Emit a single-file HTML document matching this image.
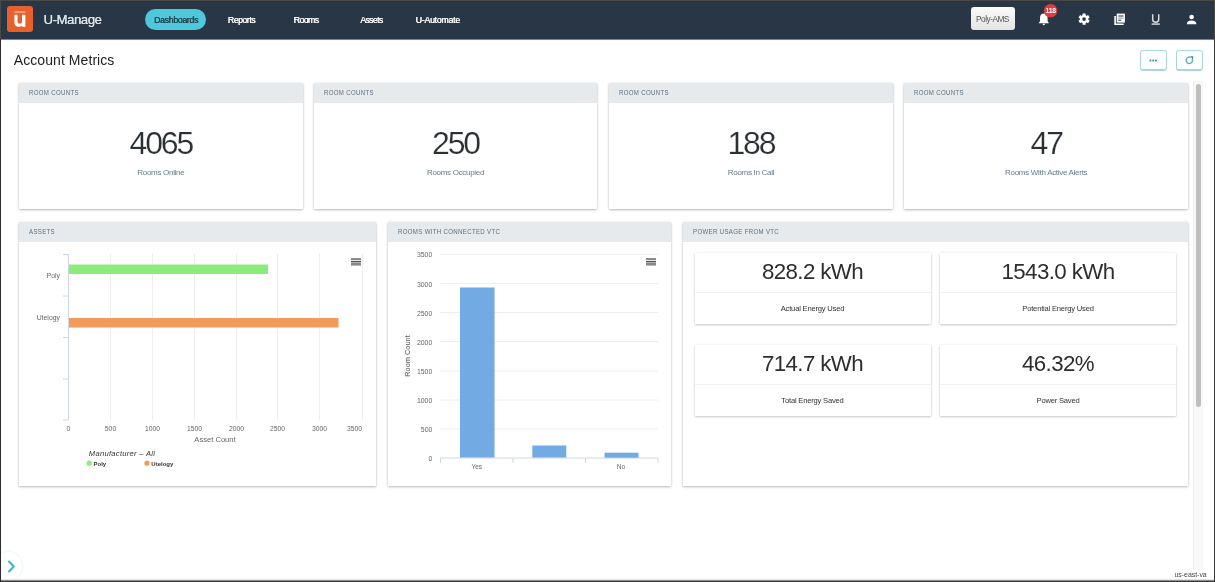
<!DOCTYPE html>
<html><head><meta charset="utf-8">
<style>
*{margin:0;padding:0;box-sizing:border-box}
html,body{width:1215px;height:582px;overflow:hidden;background:#fff}
body{font-family:"Liberation Sans",sans-serif;position:relative}
.a{position:absolute}
.t{position:absolute;white-space:nowrap;line-height:1}
#nav{position:absolute;left:1px;top:1px;width:1213px;height:38px;background:#293646;box-shadow:0 0.5px 0.5px rgba(41,54,70,.6)}
.nl{position:absolute;top:14.5px;font-size:8.8px;letter-spacing:-0.35px;color:#fff;line-height:1;text-shadow:0.3px 0 0 currentColor}
.card{position:absolute;background:#fff;box-shadow:0 1px 3px rgba(0,0,0,.1),0 1px 2px rgba(0,0,0,.18),0 0 4px rgba(0,0,0,.06)}
.ch{position:absolute;left:0;top:0;right:0;height:19.5px;background:#e7eaed}
.ct{position:absolute;left:9.8px;top:6.2px;font-size:7.6px;letter-spacing:.42px;transform:scaleX(0.8);transform-origin:0 0;color:#5d6e7c;line-height:1}
.big{position:absolute;left:0;right:0;text-align:center;font-size:32px;letter-spacing:-2.15px;color:#2b3035;line-height:1;-webkit-text-stroke:0.2px #fff}
.sub{position:absolute;left:0;right:0;text-align:center;font-size:8px;letter-spacing:-0.3px;color:#687b8c;line-height:1}
.ic{position:absolute;width:236px;height:71px;background:#fff;box-shadow:0 1px 2px rgba(0,0,0,.2),0 0 3px rgba(0,0,0,.08)}
.icv{position:absolute;left:0;right:0;top:8px;text-align:center;font-size:22.3px;color:#2d2d2d;line-height:1;letter-spacing:-0.6px}
.icd{position:absolute;left:0;right:0;top:39px;height:1px;background:#f2f2f2}
.icl{position:absolute;left:0;right:0;top:52px;text-align:center;font-size:7.6px;letter-spacing:-0.2px;color:#333;line-height:1}
svg text{font-family:"Liberation Sans",sans-serif}
</style></head><body><div id="wrap" style="position:absolute;left:0;top:0;width:1215px;height:582px;filter:blur(0.3px)">
<!-- scrollbar -->
<div class="a" style="left:1193px;top:81px;width:10px;height:489px;background:#f8f8f8;border-left:1px solid #f0f0f0"></div>
<div class="a" style="left:1195.5px;top:84px;width:5.5px;height:323px;background:#bfbfbf;border-radius:3px"></div>
<div class="t" style="left:1174.5px;top:571.5px;font-size:6.9px;letter-spacing:0px;color:#444">us-east-va</div>
<!-- chevron -->
<div class="a" style="left:-6px;top:552px;width:28px;height:28px;border-radius:50%;box-shadow:0 0 3px rgba(58,180,204,.22)"></div>
<svg class="a" style="left:0;top:548px" width="30" height="34">
  <path d="M9 13.5 L13.8 18.5 L9 23.5" fill="none" stroke="#3ab4cc" stroke-width="1.9" stroke-linecap="round" stroke-linejoin="round"/>
</svg>
<!-- top right buttons -->
<div class="a" style="left:1140px;top:49.6px;width:27px;height:21.4px;border:1px solid #a9d6de;border-bottom-width:2px;border-radius:3px;background:#fff"></div>
<div class="a" style="left:1175.6px;top:49.6px;width:27px;height:21.4px;border:1px solid #a9d6de;border-bottom-width:2px;border-radius:3px;background:#fff"></div>
<svg class="a" style="left:1140px;top:49px" width="63" height="22">
  <g fill="#2f8e9e"><rect x="9.5" y="10.6" width="1.8" height="1.8"/><rect x="12.3" y="10.6" width="1.8" height="1.8"/><rect x="15.1" y="10.6" width="1.8" height="1.8"/></g>
  <path d="M52.1 9.6 A3.2 3.2 0 1 1 50.6 8.3" fill="none" stroke="#4ba6b6" stroke-width="1.4" opacity="0.9"/>
  <path d="M50.3 7.2 L53.3 7.2 L52.9 10.4 Z" fill="#2a8e9e"/>
</svg>
<div id="nav">
  <div class="a" style="left:6px;top:5.2px;width:26px;height:25.8px;background:#e8602c;border-radius:3px">
    <svg width="26" height="26" style="position:absolute;left:0;top:0">
      <rect x="7.4" y="5.1" width="11" height="1.9" fill="#f09f7c"/>
      <path d="M7.4 8.8 H10.5 V15.6 Q10.5 17.8 12.8 17.8 Q15 17.8 15 15.6 V8.8 H18.4 V20.8 H15.1 V19.5 Q14.1 20.8 12.1 20.8 Q7.4 20.8 7.4 16.3 Z" fill="#fff"/>
    </svg>
  </div>
  <div class="t" style="left:42.5px;top:12.3px;font-size:13px;letter-spacing:-0.35px;color:#dfe3e8;text-shadow:0.35px 0 0 #dfe3e8">U-Manage</div>
  <div class="a" style="left:144.3px;top:8px;width:61px;height:21px;background:#4ec8da;border-radius:11px"></div>
  <div class="nl" style="left:153px;color:#23404c">Dashboards</div>
  <div class="nl" style="left:226.8px;letter-spacing:-0.52px">Reports</div>
  <div class="nl" style="left:292.6px;letter-spacing:-0.62px">Rooms</div>
  <div class="nl" style="left:359.2px;letter-spacing:-0.7px">Assets</div>
  <div class="nl" style="left:414.6px;letter-spacing:-0.27px">U-Automate</div>
  <div class="a" style="left:969.5px;top:6px;width:44px;height:23px;background:linear-gradient(#fbfbfb,#e4e4e4);border-radius:3px"></div>
  <div class="nl" style="left:975px;top:14.2px;font-size:8.3px;letter-spacing:-0.5px;color:#555;text-shadow:none">Poly-AMS</div>
  <svg class="a" style="left:1028px;top:-1px" width="185" height="38">
    <!-- bell -->
    <path d="M14.8 13.6 Q18.6 13.6 18.6 18.2 L18.6 21.3 L20 23.3 L9.6 23.3 L11 21.3 L11 18.2 Q11 13.6 14.8 13.6 Z" fill="#fff"/>
    <ellipse cx="14.8" cy="24.3" rx="1.1" ry="0.9" fill="#fff"/>
    <circle cx="21.6" cy="10.8" r="6.8" fill="#e03c3f"/>
    <text x="21.6" y="13.2" font-size="6.8" font-weight="bold" fill="#fff" text-anchor="middle" letter-spacing="-0.3">118</text>
    <!-- gear -->
    <g transform="translate(55.1 19.1) scale(0.92)">
      <g fill="#fff">
        <rect x="-1.7" y="-6.1" width="3.4" height="12.2" rx="0.6"/>
        <rect x="-1.7" y="-6.1" width="3.4" height="12.2" rx="0.6" transform="rotate(60)"/>
        <rect x="-1.7" y="-6.1" width="3.4" height="12.2" rx="0.6" transform="rotate(120)"/>
        <circle r="4.5"/>
      </g>
      <circle r="2" fill="#293646"/>
    </g>
    <!-- docs -->
    <g transform="translate(84.3 13.3)">
      <path d="M2.6 2.6 H1 V11.6 H10.4 V10.1 H2.6 Z" fill="#fff"/>
      <rect x="3.4" y="0.3" width="8.2" height="9" fill="#fff"/>
      <rect x="4.9" y="2.2" width="5.4" height="1" fill="#293646"/>
      <rect x="4.9" y="4.3" width="5.4" height="1" fill="#293646" opacity="0.55"/>
      <rect x="4.9" y="6.4" width="3" height="1" fill="#293646"/>
    </g>
    <!-- U -->
    <path d="M123.7 14.2 V19.6 Q123.7 22.2 126.7 22.2 Q129.7 22.2 129.7 19.6 V14.2" fill="none" stroke="#d8dce2" stroke-width="1.5"/>
    <rect x="122.6" y="23.2" width="8.2" height="1.8" fill="#b4bbc5"/>
    <!-- user -->
    <circle cx="162.6" cy="17" r="2.3" fill="#fff"/>
    <path d="M157.8 24.3 Q157.8 20.4 162.6 20.4 Q167.4 20.4 167.4 24.3 Z" fill="#fff"/>
  </svg>
</div>
<div class="t" style="left:13.8px;top:53px;font-size:14px;letter-spacing:0.07px;color:#222">Account Metrics</div>

<!-- row 1 -->
<div class="card" style="left:19px;top:83px;width:283.7px;height:126.4px">
  <div class="ch"><div class="ct">ROOM COUNTS</div></div>
  <div class="big" style="top:43.8px">4065</div>
  <div class="sub" style="top:85.6px">Rooms Online</div>
</div>
<div class="card" style="left:313.8px;top:83px;width:283.5px;height:126.4px">
  <div class="ch"><div class="ct">ROOM COUNTS</div></div>
  <div class="big" style="top:43.8px">250</div>
  <div class="sub" style="top:85.6px">Rooms Occupied</div>
</div>
<div class="card" style="left:609.2px;top:83px;width:283.5px;height:126.4px">
  <div class="ch"><div class="ct">ROOM COUNTS</div></div>
  <div class="big" style="top:43.8px">188</div>
  <div class="sub" style="top:85.6px">Rooms In Call</div>
</div>
<div class="card" style="left:904.4px;top:83px;width:283.6px;height:126.4px">
  <div class="ch"><div class="ct">ROOM COUNTS</div></div>
  <div class="big" style="top:43.8px">47</div>
  <div class="sub" style="top:85.6px">Rooms With Active Alerts</div>
</div>

<!-- row 2 -->
<div class="card" style="left:19px;top:222px;width:357px;height:264px">
  <div class="ch"><div class="ct">ASSETS</div></div>
</div>
<div class="card" style="left:388px;top:222px;width:283px;height:264px">
  <div class="ch"><div class="ct">ROOMS WITH CONNECTED VTC</div></div>
</div>
<div class="card" style="left:683px;top:222px;width:505px;height:264px">
  <div class="ch"><div class="ct">POWER USAGE FROM VTC</div></div>
  <div class="ic" style="left:11.5px;top:31px"><div class="icv">828.2 kWh</div><div class="icd"></div><div class="icl">Actual Energy Used</div></div>
  <div class="ic" style="left:257px;top:31px"><div class="icv">1543.0 kWh</div><div class="icd"></div><div class="icl">Potential Energy Used</div></div>
  <div class="ic" style="left:11.5px;top:123px"><div class="icv">714.7 kWh</div><div class="icd"></div><div class="icl">Total Energy Saved</div></div>
  <div class="ic" style="left:257px;top:123px"><div class="icv">46.32%</div><div class="icd"></div><div class="icl">Power Saved</div></div>
</div>

<!-- charts overlay -->
<svg class="a" style="left:0;top:0" width="1215" height="582" viewBox="0 0 1215 582">
  <!-- assets chart -->
  <g stroke="#ededed" stroke-width="1">
    <line x1="110.5" y1="254" x2="110.5" y2="420"/>
    <line x1="152.5" y1="254" x2="152.5" y2="420"/>
    <line x1="194.5" y1="254" x2="194.5" y2="420"/>
    <line x1="236.5" y1="254" x2="236.5" y2="420"/>
    <line x1="277.5" y1="254" x2="277.5" y2="420"/>
    <line x1="319.5" y1="254" x2="319.5" y2="420"/>
    <line x1="362.5" y1="254" x2="362.5" y2="420"/>
  </g>
  <g stroke="#ccd6eb" stroke-width="1">
    <line x1="68.5" y1="254" x2="68.5" y2="420"/>
    <line x1="63" y1="254.5" x2="68" y2="254.5"/>
    <line x1="63" y1="296" x2="68" y2="296"/>
    <line x1="63" y1="337.5" x2="68" y2="337.5"/>
    <line x1="63" y1="379" x2="68" y2="379"/>
    <line x1="63" y1="420" x2="68" y2="420"/>
  </g>
  <rect x="69" y="264.5" width="199" height="9.5" fill="#8beb7b"/>
  <rect x="69" y="318" width="269.5" height="9.5" fill="#f39b5a"/>
  <g font-size="6.9" fill="#666" text-anchor="end">
    <text x="60" y="278.2">Poly</text>
    <text x="60" y="320.2">Utelogy</text>
  </g>
  <g font-size="6.8" fill="#666" text-anchor="middle">
    <text x="68.5" y="430.5">0</text>
    <text x="110.5" y="430.5">500</text>
    <text x="152.5" y="430.5">1000</text>
    <text x="194.5" y="430.5">1500</text>
    <text x="236.5" y="430.5">2000</text>
    <text x="277.5" y="430.5">2500</text>
    <text x="319.5" y="430.5">3000</text>
    <text x="354.5" y="430.5">3500</text>
    <text x="215" y="441.5" font-size="7.6">Asset Count</text>
  </g>
  <text x="88.8" y="456" font-size="7.6" font-style="italic" fill="#333" letter-spacing="0.28">Manufacturer – All</text>
  <circle cx="89.2" cy="463.2" r="2.6" fill="#8beb7b"/>
  <text x="93.5" y="465.5" font-size="6" font-weight="bold" fill="#333">Poly</text>
  <circle cx="147" cy="463.2" r="2.6" fill="#f39b5a"/>
  <text x="151.3" y="465.5" font-size="6" font-weight="bold" fill="#333">Utelogy</text>
  <g>
    <rect x="351" y="258" width="10" height="2.2" fill="#8a8a8a"/>
    <rect x="351" y="261" width="10" height="1.2" fill="#555"/>
    <rect x="351" y="262.2" width="10" height="0.8" fill="#a8a8a8"/>
    <rect x="351" y="263" width="10" height="2.6" fill="#8a8a8a"/>
  </g>

  <!-- VTC chart -->
  <g stroke="#eeeeee" stroke-width="1">
    <line x1="440" y1="254.5" x2="658" y2="254.5"/>
    <line x1="440" y1="283.5" x2="658" y2="283.5"/>
    <line x1="440" y1="312.5" x2="658" y2="312.5"/>
    <line x1="440" y1="341.5" x2="658" y2="341.5"/>
    <line x1="440" y1="371" x2="658" y2="371"/>
    <line x1="440" y1="400" x2="658" y2="400"/>
    <line x1="440" y1="429" x2="658" y2="429"/>
  </g>
  <g stroke="#ccd6eb" stroke-width="1">
    <line x1="440" y1="458" x2="658.5" y2="458"/>
    <line x1="440.5" y1="458" x2="440.5" y2="463"/>
    <line x1="513" y1="458" x2="513" y2="463"/>
    <line x1="585.5" y1="458" x2="585.5" y2="463"/>
    <line x1="658" y1="458" x2="658" y2="463"/>
  </g>
  <rect x="460" y="287.5" width="34.5" height="170" fill="#72aae4"/>
  <rect x="532.3" y="445.5" width="34" height="12" fill="#72aae4"/>
  <rect x="604.5" y="452.7" width="34" height="5" fill="#72aae4"/>
  <g font-size="6.9" fill="#666" text-anchor="end">
    <text x="432.3" y="257.4">3500</text>
    <text x="432.3" y="286.5">3000</text>
    <text x="432.3" y="315.6">2500</text>
    <text x="432.3" y="344.7">2000</text>
    <text x="432.3" y="373.8">1500</text>
    <text x="432.3" y="402.9">1000</text>
    <text x="432.3" y="432.0">500</text>
    <text x="432.3" y="461.1">0</text>
  </g>
  <g font-size="6.5" fill="#666" text-anchor="middle">
    <text x="476.7" y="469">Yes</text>
    <text x="621" y="469">No</text>
  </g>
  <text x="0" y="0" font-size="7.4" fill="#555" text-anchor="middle" transform="translate(410.2 356) rotate(-90)">Room Count</text>
  <g>
    <rect x="646" y="258" width="10" height="2.2" fill="#8a8a8a"/>
    <rect x="646" y="261" width="10" height="1.2" fill="#555"/>
    <rect x="646" y="262.2" width="10" height="0.8" fill="#a8a8a8"/>
    <rect x="646" y="263" width="10" height="2.6" fill="#8a8a8a"/>
  </g>
</svg>
</div>
<!-- window border -->
<div class="a" style="left:0;top:579px;width:1215px;height:1px;background:#e3e5e5"></div>
<div class="a" style="left:0;top:580px;width:1215px;height:1px;background:#8f8f8f"></div>
<div class="a" style="left:0;top:581px;width:1215px;height:1px;background:#383838"></div>
<div class="a" style="left:0;top:0;width:1215px;height:1px;background:#4a4846"></div>
<div class="a" style="left:0;top:39px;width:1px;height:543px;background:#2c2c2c"></div>
<div class="a" style="left:1214px;top:39px;width:1px;height:543px;background:#363636"></div>
<div class="a" style="left:0;top:0;width:1px;height:39px;background:#4a4846"></div>
<div class="a" style="left:1214px;top:0;width:1px;height:39px;background:#4a4846"></div>
</body></html>
